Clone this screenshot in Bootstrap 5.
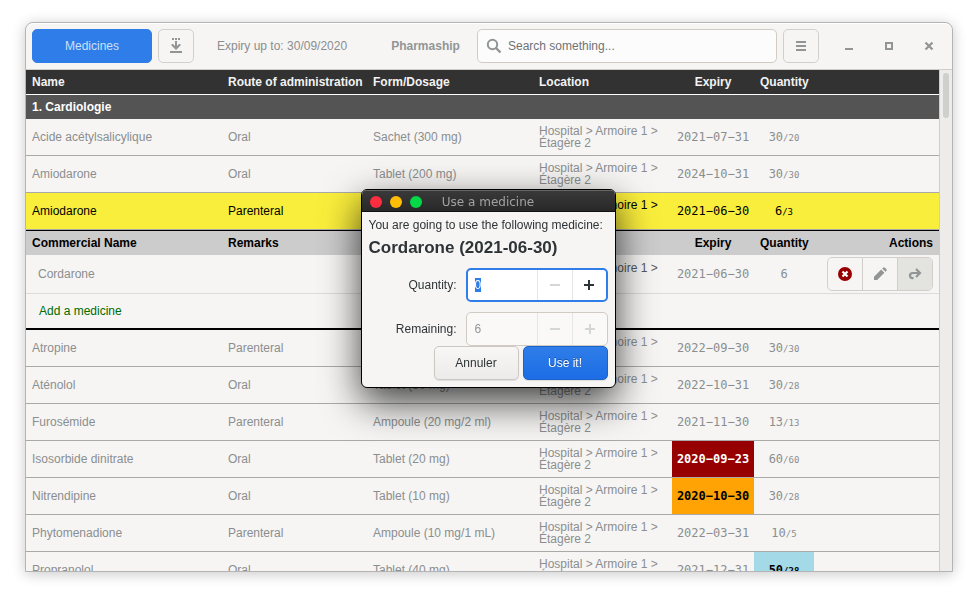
<!DOCTYPE html>
<html lang="en">
<head>
<meta charset="utf-8">
<meta name="viewport" content="width=device-width, initial-scale=1">
<title>Pharmaship</title>
<link href="https://cdn.jsdelivr.net/npm/bootstrap@5.3.0/dist/css/bootstrap.min.css" rel="stylesheet">
<style>
  body { font: 12px/14px "Liberation Sans", Arial, sans-serif; color: #8b8e8f; background: #fff; }
  .desk { height: 100vh; padding: 22px 25px 28px; }
  .app-window { background: #f6f5f4; border: 1px solid #b4b4b4; border-radius: 8px 8px 0 0; box-shadow: 0 2px 14px rgba(0,0,0,.22); }
  .app-header { padding: 6px 3px 6px 6px; gap: 6px; border-bottom: 1px solid #cfccc9; box-shadow: inset 0 1px #fff; border-radius: 8px 8px 0 0; }
  .gtk-btn { height: 34px; font-size: 12px; line-height: 14px; border-radius: 5px; border: 1px solid #d2cfcb; padding: 0; color: #929595; display: flex; align-items: center; justify-content: center; background: #f6f5f4; }
  .gtk-btn.tab { width: 120px; background: #2f7de8; border-color: #2f7de8; color: #cde0fa; }
  .gtk-btn.square { width: 36px; }
  .win-btn { width: 40px; height: 34px; border: 0; padding: 0; background: none; color: #929595; display: flex; align-items: center; justify-content: center; }
  .expiry-note { padding: 0 17px; }
  .app-title { padding-left: 10px; color: #929595; }
  .search-box { width: 300px; height: 34px; border: 1px solid #d2cbc4; border-radius: 5px; background: #fcfcfc; padding: 0 8px; gap: 6px; }
  .search-box input, .spin input { border: 0; outline: 0; background: none; font-size: 12px; padding: 0; min-width: 0; }
  .search-box input::placeholder { color: #6f7374; opacity: 1; }
  .scroll-track { width: 13px; background: #edecea; border-left: 1px solid #cfccc9; padding: 3px; }
  .scroll-thumb { height: 45px; border-radius: 3px; background: #cfcfce; }

  .med-table { width: 100%; table-layout: fixed; border-collapse: separate; border-spacing: 0; }
  .med-table th, .med-table td { padding: 0 6px; height: 37px; vertical-align: middle; border-bottom: 1px solid #a9a9a8; }
  .c-route { width: 145px; } .c-form { width: 166px; } .c-loc { width: 139px; }
  .c-exp { width: 82px; } .c-qty { width: 60px; } .c-act { width: 125px; }
  .med-table .head-row th { height: 25px; background: #323232; color: #f2f2f2; border-bottom-color: #fff; white-space: nowrap; }
  .med-table .group-row th { height: 24px; background: #545454; color: #fff; border: 0; }
  .med-table .sub-row th { height: 25px; background: #ccc; color: #000; border-bottom: 0; border-top: 1px solid #000; }
  .med-table .item-row td { height: 39px; border-bottom-color: #dcdbda; }
  .med-table .item-row td:first-child { padding-left: 12px; }
  .med-table .add-row td { height: 36px; border-bottom: 2px solid #000; padding-left: 13px; }
  .add-row a { color: #006b00; text-decoration: none; }
  .picked td { background: #faee3c; color: #000; }
  .med-table .loc { line-height: 12px; }
  .item-row .loc { color: #55585a; }
  .date, .qty { font-family: "DejaVu Sans Mono", monospace; text-align: center; }
  .med-table .date { padding: 0 4px; }
  .qty span { font-size: 9px; }
  .med-table .expired { background: #960000; color: #fff; font-weight: 700; }
  .med-table .expiring { background: #ffa203; color: #000; font-weight: 700; }
  .med-table .surplus { background: #a4d9e7; color: #000; font-weight: 700; }
  .row-actions { width: 106px; margin-left: auto; border: 1px solid #d2cfcb; border-radius: 5px; overflow: hidden; }
  .row-actions button { flex: 1 1 0; height: 32px; border: 0; padding: 0; background: none; color: #929595; display: flex; align-items: center; justify-content: center; }
  .row-actions button + button { border-left: 1px solid #d2cfcb; }
  .row-actions button.lit { background: #e3e4e0; }

  .dialog-layer { position: fixed; inset: 0; padding: 0 2px 23px 0; }
  .use-dialog { width: 255px; background: #f6f5f4; border: 1px solid #000; border-radius: 6px; overflow: hidden; color: #2e3436; box-shadow: 0 14px 38px rgba(0,0,0,.75); }
  .dialog-bar { display: grid; grid-template-columns: 1fr auto 1fr; align-items: center; height: 22px; padding: 2px 8px 0; background: linear-gradient(#3a3a3a, #282828); border-bottom: 1px solid #111; box-shadow: inset 0 1px #666; color: #a2a2a2; font: 12px/14px "DejaVu Sans", sans-serif; }
  .light { width: 12px; height: 12px; border: 0; padding: 0; border-radius: 50%; }
  .light.red { background: #ff2d3f; } .light.amber { background: #ffbd05; } .light.green { background: #05d947; }
  .dialog-body { padding: 6px 7px 7px; }
  .dialog-body h1 { font-size: 17px; line-height: 20px; margin: 6px 0 10px; font-weight: 700; white-space: nowrap; }
  .field-row { display: grid; grid-template-columns: 1fr 142px; column-gap: 9px; align-items: center; }
  .field-row + .field-row { margin-top: 10px; }
  .field-row label { text-align: right; }
  .spin { height: 34px; display: grid; grid-template-columns: 1fr 35px 35px; border: 1px solid #d2cbc4; border-radius: 5px; background: #faf9f8; overflow: hidden; }
  .spin input { padding-left: 8px; color: #929595; width: 100%; line-height: 14px; }
  .spin button { border: 0; border-left: 1px solid #e8e6e4; background: none; padding: 0; color: #d5d6d6; display: flex; align-items: center; justify-content: center; }
  .spin.active { border: 2px solid #2f7de8; background: #fff; grid-template-columns: 1fr 35px 34px; }
  .spin.active input { padding-left: 7px; color: #2e3436; }
  .spin.active .plus { color: #2e3436; }
  .spin input::selection { background: #2f7de8; color: #fff; }
  .dialog-btn { width: 85px; border-color: #cdc7c2; background: linear-gradient(#f8f7f6, #edebe9); color: #2e3436; box-shadow: 0 1px 1px rgba(0,0,0,.1); }
  .dialog-btn.go { background: linear-gradient(#2f7de8, #1c6de6); border-color: #1b62c9; color: #fff; text-shadow: 0 -1px rgba(0,0,0,.35); }
</style>
<script src="https://cdn.jsdelivr.net/npm/bootstrap@5.3.0/dist/js/bootstrap.bundle.min.js"></script>
</head>
<body>
<div class="desk d-flex">
  <main class="app-window d-flex flex-column flex-fill overflow-hidden">
    <header class="app-header d-flex align-items-center">
      <button type="button" class="gtk-btn tab">Medicines</button>
      <button type="button" class="gtk-btn square" aria-label="Export">
        <svg width="16" height="16" viewBox="0 0 16 16" fill="currentColor"><path d="M4 0h2v2H4zM7 0h2v2H7zM10 0h2v2h-2zM7 3h2v5l2-2h1.500v1.500L8 12 3.500 7.500V6H5l2 2zM2 13h12v2H2z"/></svg>
      </button>
      <span class="expiry-note text-nowrap">Expiry up to: 30/09/2020</span>
      <strong class="app-title flex-fill text-center">Pharmaship</strong>
      <div class="search-box d-flex align-items-center">
        <svg width="16" height="16" viewBox="0 0 16 16" fill="none" stroke="#929595" stroke-width="2"><circle cx="6.500" cy="6.500" r="4.700"/><path d="M10 10l4.500 4.500" stroke-width="2.400"/></svg>
        <input type="text" class="flex-fill" placeholder="Search something..." aria-label="Search">
      </div>
      <button type="button" class="gtk-btn square" aria-label="Menu">
        <svg width="16" height="16" viewBox="0 0 16 16" fill="currentColor"><path d="M3 3h10v2H3zM3 7h10v2H3zM3 11h10v2H3z"/></svg>
      </button>
      <div class="d-flex ms-1">
        <button type="button" class="win-btn" aria-label="Minimize"><svg width="16" height="16" fill="currentColor"><path d="M4 10h8v2H4z"/></svg></button>
        <button type="button" class="win-btn" aria-label="Maximize"><svg width="16" height="16" fill="none" stroke="currentColor" stroke-width="2"><path d="M5 5h6v6H5z"/></svg></button>
        <button type="button" class="win-btn" aria-label="Close"><svg width="16" height="16" fill="none" stroke="currentColor" stroke-width="2.200"><path d="M4.500 4.500l7 7M11.500 4.500l-7 7"/></svg></button>
      </div>
    </header>
    <div class="d-flex flex-fill overflow-hidden">
      <div class="flex-fill overflow-hidden">
        <table class="med-table">
          <colgroup><col><col class="c-route"><col class="c-form"><col class="c-loc"><col class="c-exp"><col class="c-qty"><col class="c-act"></colgroup>
          <thead>
            <tr class="head-row"><th>Name</th><th>Route of administration</th><th>Form/Dosage</th><th>Location</th><th class="text-center">Expiry</th><th class="text-center">Quantity</th><th></th></tr>
          </thead>
          <tbody>
            <tr class="group-row"><th colspan="7">1. Cardiologie</th></tr>
            <tr><td>Acide acétylsalicylique</td><td>Oral</td><td>Sachet (300 mg)</td><td class="loc">Hospital &gt; Armoire 1 &gt; Étagère 2</td><td class="date">2021−07−31</td><td class="qty">30<span>/20</span></td><td></td></tr>
            <tr><td>Amiodarone</td><td>Oral</td><td>Tablet (200 mg)</td><td class="loc">Hospital &gt; Armoire 1 &gt; Étagère 2</td><td class="date">2024−10−31</td><td class="qty">30<span>/30</span></td><td></td></tr>
            <tr class="picked"><td>Amiodarone</td><td>Parenteral</td><td></td><td class="loc">Hospital &gt; Armoire 1 &gt; Étagère 2</td><td class="date">2021−06−30</td><td class="qty">6<span>/3</span></td><td></td></tr>
            <tr class="sub-row"><th>Commercial Name</th><th colspan="3">Remarks</th><th class="text-center">Expiry</th><th class="text-center">Quantity</th><th class="text-end">Actions</th></tr>
            <tr class="item-row"><td>Cordarone</td><td></td><td></td><td class="loc">Hospital &gt; Armoire 1 &gt; Étagère 2</td><td class="date">2021−06−30</td><td class="qty">6</td>
              <td>
                <div class="row-actions d-flex">
                  <button type="button" aria-label="Delete"><svg width="16" height="16" viewBox="0 0 16 16"><circle cx="8" cy="8" r="7" fill="#960000"/><path d="M5.500 5.500l5 5M10.500 5.500l-5 5" stroke="#fff" stroke-width="2.200"/></svg></button>
                  <button type="button" aria-label="Edit"><svg width="16" height="16" viewBox="0 0 16 16" fill="currentColor"><path d="M2 14v-3.200L9.200 3.600l3.200 3.200L5.200 14zM10.200 2.600l.9-.9a1.300 1.300 0 0 1 1.800 0l1.400 1.400a1.300 1.300 0 0 1 0 1.800l-.9.9z"/></svg></button>
                  <button type="button" class="lit" aria-label="Use"><svg width="16" height="16" viewBox="0 0 16 16" fill="none" stroke="currentColor" stroke-width="2.200"><path d="M6.500 12.200H5.600a2.600 2.600 0 0 1 0-5.200H12.500M9 3l4 4-4 4"/></svg></button>
                </div>
              </td></tr>
            <tr class="add-row"><td colspan="7"><a href="#">Add a medicine</a></td></tr>
            <tr><td>Atropine</td><td>Parenteral</td><td></td><td class="loc">Hospital &gt; Armoire 1 &gt; Étagère 2</td><td class="date">2022−09−30</td><td class="qty">30<span>/30</span></td><td></td></tr>
            <tr><td>Aténolol</td><td>Oral</td><td>Tablet (50 mg)</td><td class="loc">Hospital &gt; Armoire 1 &gt; Étagère 2</td><td class="date">2022−10−31</td><td class="qty">30<span>/28</span></td><td></td></tr>
            <tr><td>Furosémide</td><td>Parenteral</td><td>Ampoule (20 mg/2 ml)</td><td class="loc">Hospital &gt; Armoire 1 &gt; Étagère 2</td><td class="date">2021−11−30</td><td class="qty">13<span>/13</span></td><td></td></tr>
            <tr><td>Isosorbide dinitrate</td><td>Oral</td><td>Tablet (20 mg)</td><td class="loc">Hospital &gt; Armoire 1 &gt; Étagère 2</td><td class="date expired">2020−09−23</td><td class="qty">60<span>/60</span></td><td></td></tr>
            <tr><td>Nitrendipine</td><td>Oral</td><td>Tablet (10 mg)</td><td class="loc">Hospital &gt; Armoire 1 &gt; Étagère 2</td><td class="date expiring">2020−10−30</td><td class="qty">30<span>/28</span></td><td></td></tr>
            <tr><td>Phytomenadione</td><td>Parenteral</td><td>Ampoule (10 mg/1 mL)</td><td class="loc">Hospital &gt; Armoire 1 &gt; Étagère 2</td><td class="date">2022−03−31</td><td class="qty">10<span>/5</span></td><td></td></tr>
            <tr><td>Propranolol</td><td>Oral</td><td>Tablet (40 mg)</td><td class="loc">Hospital &gt; Armoire 1 &gt; Étagère 2</td><td class="date">2021−12−31</td><td class="qty surplus">50<span>/28</span></td><td></td></tr>
          </tbody>
        </table>
      </div>
      <div class="scroll-track flex-shrink-0"><div class="scroll-thumb"></div></div>
    </div>
  </main>
</div>

<div class="dialog-layer d-flex align-items-center justify-content-center">
  <section class="use-dialog" role="dialog" aria-labelledby="dialog-title">
    <div class="dialog-bar">
      <div class="d-flex gap-2">
        <button type="button" class="light red" aria-label="Close"></button>
        <button type="button" class="light amber" aria-label="Minimize"></button>
        <button type="button" class="light green" aria-label="Zoom"></button>
      </div>
      <span id="dialog-title">Use a medicine</span>
    </div>
    <form class="dialog-body">
      <div class="text-nowrap">You are going to use the following medicine:</div>
      <h1>Cordarone (2021-06-30)</h1>
      <div class="field-row">
        <label for="qty">Quantity:</label>
        <div class="spin active">
          <input type="text" id="qty" value="0">
          <button type="button" aria-label="Decrease"><svg width="16" height="16" fill="currentColor"><path d="M3 7h10v2H3z"/></svg></button>
          <button type="button" class="plus" aria-label="Increase"><svg width="16" height="16" fill="currentColor"><path d="M3 7h4V3h2v4h4v2H9v4H7V9H3z"/></svg></button>
        </div>
      </div>
      <div class="field-row">
        <label for="left">Remaining:</label>
        <div class="spin">
          <input type="text" id="left" value="6" disabled>
          <button type="button" disabled aria-label="Decrease remaining"><svg width="16" height="16" fill="currentColor"><path d="M3 7h10v2H3z"/></svg></button>
          <button type="button" disabled aria-label="Increase remaining"><svg width="16" height="16" fill="currentColor"><path d="M3 7h4V3h2v4h4v2H9v4H7V9H3z"/></svg></button>
        </div>
      </div>
      <div class="d-flex gap-1 justify-content-end">
        <button type="button" class="gtk-btn dialog-btn">Annuler</button>
        <button type="button" class="gtk-btn dialog-btn go">Use it!</button>
      </div>
    </form>
  </section>
</div>
<script>
  const quantity = document.getElementById('qty');
  quantity.focus();
  quantity.select();
</script>
</body>
</html>
